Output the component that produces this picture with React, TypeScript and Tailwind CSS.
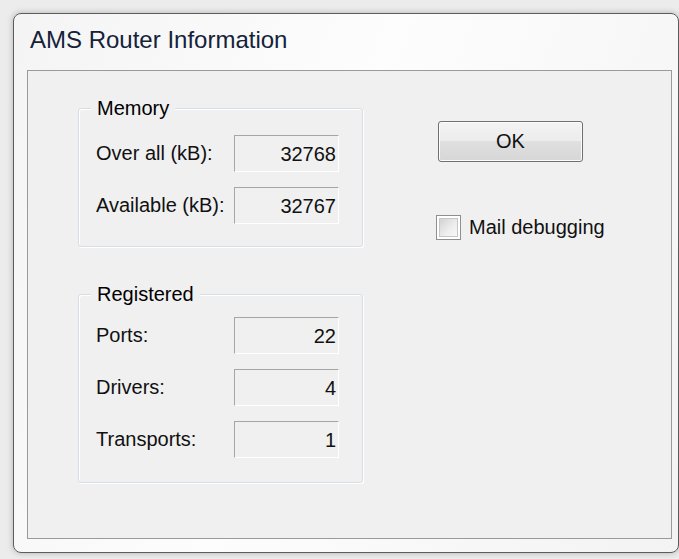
import React from 'react';

type Row = { label: string; value: string };

const memoryRows: Row[] = [
  { label: 'Over all (kB):', value: '32768' },
  { label: 'Available (kB):', value: '32767' },
];

const registeredRows: Row[] = [
  { label: 'Ports:', value: '22' },
  { label: 'Drivers:', value: '4' },
  { label: 'Transports:', value: '1' },
];

const GroupBox: React.FC<{ title: string; className: string; children: React.ReactNode }> = ({
  title,
  className,
  children,
}) => (
  <div
    className={`relative w-[285px] rounded-[3px] border border-[#d5dfe5] shadow-[inset_1px_1px_0_#ffffff,1px_1px_0_#ffffff] pl-[17px] ${className}`}
  >
    <span className="absolute left-[12px] top-[-12px] bg-[#f0f0f0] px-[6px] text-[20px] leading-[23px] text-black">
      {title}
    </span>
    {children}
  </div>
);

const ValueRows: React.FC<{ rows: Row[] }> = ({ rows }) => (
  <div className="flex flex-col gap-[15px]">
    {rows.map((r) => (
      <div key={r.label} className="flex items-center">
        <span className="w-[138px] text-[20px] leading-[23px] text-[#111]">{r.label}</span>
        <div className="flex h-[37px] w-[105px] items-center justify-end border border-t-[#a6a6a6] border-l-[#a6a6a6] border-b-white border-r-white pr-[2px] text-[20px] text-[#111]">
          {r.value}
        </div>
      </div>
    ))}
  </div>
);

export default function App() {
  return (
    <div className="h-[559px] w-[679px] overflow-hidden bg-[#ececec] pl-[13px] pt-[13px] font-['Liberation_Sans',Arial,sans-serif]">
      <div className="flex h-[540px] w-[666px] flex-col rounded-[8px] border border-[#5c5c5c] bg-[linear-gradient(110deg,#f4f4f4_0%,#fdfdfd_45%,#f3f3f3_100%)] pb-[13px] pl-[13px] pr-[6px] pt-[12px] shadow-[0_0_6px_rgba(0,0,0,0.25)]">
        <div className="h-[44px] pl-[3px] text-[24px] leading-[28px] text-[#15223a]">
          AMS Router Information
        </div>

        <div className="flex flex-1 border border-[#9a9a9a] bg-[#f0f0f0] pl-[50px] pt-[37px]">
          <div className="flex flex-col gap-[47px]">
            <GroupBox title="Memory" className="pt-[26px] pb-[22px]">
              <ValueRows rows={memoryRows} />
            </GroupBox>
            <GroupBox title="Registered" className="pt-[22px] pb-[24px]">
              <ValueRows rows={registeredRows} />
            </GroupBox>
          </div>

          <div className="ml-[75px] flex flex-col items-start pt-[13px]">
            <button
              type="button"
              className="flex h-[41px] w-[145px] items-center justify-center rounded-[3px] border border-[#707070] bg-[linear-gradient(to_bottom,#f3f3f3_0%,#ececec_50%,#e0e0e0_50%,#d6d6d6_100%)] pb-[2px] text-[20px] text-[#111] shadow-[inset_0_0_0_1px_#fbfbfb]"
            >
              OK
            </button>

            <label className="-ml-[2px] mt-[53px] flex items-center gap-[8px] text-[20px] leading-[25px] text-[#111]">
              <span className="flex h-[25px] w-[25px] border border-[#8e8f8f] bg-white p-[2px]">
                <span className="h-full w-full border border-[#c6c6c6] bg-[linear-gradient(135deg,#d2d2d2_0%,#eeeeee_60%,#f8f8f8_100%)]" />
              </span>
              Mail debugging
            </label>
          </div>
        </div>
      </div>
    </div>
  );
}
